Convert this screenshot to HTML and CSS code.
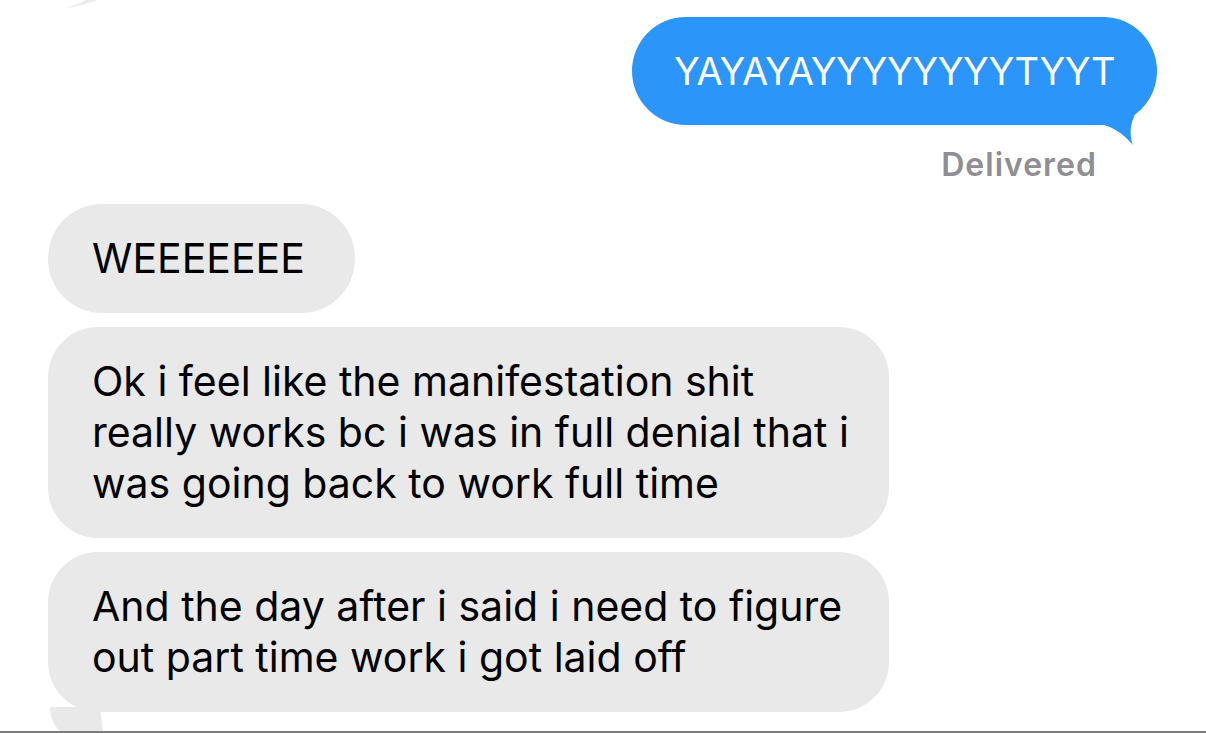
FILE: index.html
```html
<!DOCTYPE html>
<html>
<head>
<meta charset="utf-8">
<link rel="stylesheet" href="styles.css">
</head>
<body>
<div class="screen">
  <svg class="prev-tail" width="40" height="10" viewBox="0 0 40 10"><path d="M4,8 C12,5 18,3 24,0 L36,0 C28,3 18,6 4,8 Z" fill="#ececec"/></svg>
  <div class="thread">
    <div class="row out">
      <div class="bubble blue">YAYAYAYYYYYYYYTYYT
        <svg class="tail tail-blue" width="66" height="64" viewBox="0 0 66 64"><path d="M0,28 L0,40 C17,41 30,50 40,62 C35,48 37,30 59,10 L40,0 Z" fill="#2b95fa"/></svg>
      </div>
    </div>
    <div class="status">Delivered</div>
    <div class="row in">
      <div class="bubble grey w1">WEEEEEEE</div>
    </div>
    <div class="row in">
      <div class="bubble grey w2">Ok i feel like the manifestation shit<br>really works bc i was in full denial that i<br>was going back to work full time</div>
    </div>
    <div class="row in">
      <div class="bubble grey w2">And the day after i said i need to figure<br>out part time work i got laid off
        <svg class="tail tail-grey" width="70" height="60" viewBox="0 0 70 60"><path d="M60,0 L10,0 C10,20 25,30 36,36 C34,42 32,48 32,55 L44,55 C48,42 54,35 64,33 Z" fill="#e9e9e9"/></svg>
      </div>
    </div>
  </div>
  <div class="baseline"></div>
</div>
</body>
</html>
```
FILE: styles.css
```css
html, body {
  margin: 0;
  padding: 0;
  background: #ffffff;
}
.screen {
  position: relative;
  width: 1206px;
  height: 733px;
  display: flex;
  flex-direction: column;
  overflow: hidden;
  font-family: Inter, "Liberation Sans", sans-serif;
}
.prev-tail {
  position: absolute;
  left: 62px;
  top: 0;
}
.thread {
  flex: 1;
  display: flex;
  flex-direction: column;
  padding: 17px 49px 0 48px;
}
.row {
  display: flex;
}
.row.out {
  justify-content: flex-end;
}
.row.in {
  justify-content: flex-start;
  margin-bottom: 14px;
}
.bubble {
  position: relative;
  box-sizing: border-box;
  font-size: 41px;
  line-height: 51px;
  padding: 29px 30px 29px 44px;
  border-radius: 54px;
  white-space: nowrap;
}
.bubble.blue {
  width: 525px;
  height: 108px;
  background: #2b95fa;
  color: #ffffff;
  text-align: center;
  font-size: 38px;
  letter-spacing: -0.4px;
  padding-left: 0;
  padding-right: 0;
}
.bubble.grey {
  background: #e9e9e9;
  color: #000000;
}
.w1 { width: 307px; height: 109px; }
.w2 { width: 841px; border-radius: 50px; }
.tail {
  position: absolute;
}
.tail-blue {
  right: -2px;
  bottom: -22px;
}
.tail-grey {
  left: -8px;
  bottom: -55px;
}
.status {
  align-self: flex-end;
  margin: 24px 60px 23px 0;
  font-size: 32px;
  line-height: 32px;
  font-weight: 600;
  letter-spacing: 1px;
  color: #8e8e93;
}
.baseline {
  height: 2px;
  background: #7d7d7d;
  position: relative;
  z-index: 2;
}
```
